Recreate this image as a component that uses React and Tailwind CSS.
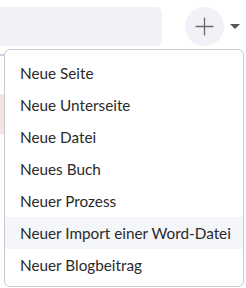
import { Plus } from 'lucide-react'

const items = [
  'Neue Seite',
  'Neue Unterseite',
  'Neue Datei',
  'Neues Buch',
  'Neuer Prozess',
  'Neuer Import einer Word-Datei',
  'Neuer Blogbeitrag',
]

const App = () => {
  return (
    <div className="relative h-[288px] w-[246px] overflow-hidden bg-white" style={{ fontFamily: 'Lato, "Noto Sans", sans-serif' }}>
      {/* header */}
      <div className="flex items-center pt-[7px]">
        <div className="h-[39px] w-[162px] rounded-r-[6px] bg-[#f1f2f7]" />
        <div className="ml-[23px] flex h-[39px] w-[39px] items-center justify-center rounded-full bg-[#f1f2f7]">
          <Plus className="h-[29px] w-[29px] text-[#6b6b6b]" strokeWidth={1.1} />
        </div>
        <div className="ml-[6px] h-0 w-0 border-x-[5px] border-t-[5px] border-x-transparent border-t-[#555]" />
      </div>

      {/* page behind */}
      <div className="mt-[8px] h-[2px] w-[6px] bg-[#c9d3ea]" />
      <div className="mt-[38px] h-[40px] w-[6px] bg-[#f6e3e1]" />

      {/* dropdown */}
      <div className="absolute left-[4px] top-[49px] w-[240px] rounded-[6px] border border-[#c8c8c8] bg-white pt-[7px] pb-[5px]">
        {items.map((item, i) => (
          <div
            key={item}
            className={`flex h-[32px] items-center pl-[15px] text-[15.3px] text-[#2a2a2a] ${i === 5 ? 'bg-[#f5f6f9]' : ''}`}
          >
            {item}
          </div>
        ))}
      </div>
    </div>
  )
}

export default App
